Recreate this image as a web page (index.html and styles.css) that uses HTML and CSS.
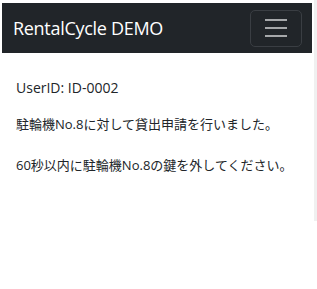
FILE: index.html
```html
<!DOCTYPE html>
<html lang="ja">

<head>
    <meta charset="UTF-8">
    <meta name="viewport" content="width=device-width, initial-scale=1.0">
    <title>RentalCycle DEMO</title>
    <link rel="stylesheet" href="styles.css">
</head>

<body>
    <nav class="navbar">
        <a class="brand" href="#">RentalCycle DEMO</a>
        <button class="toggler" type="button">
            <span class="toggler-icon"></span>
        </button>
    </nav>
    <main class="content">
        <div class="user">UserID: ID-0002</div>
        <p>駐輪機No.8に対して貸出申請を行いました。</p>
        <p>60秒以内に駐輪機No.8の鍵を外してください。</p>
    </main>
</body>

</html>
```

FILE: styles.css
```css
html {
    background-color: white;
    border-right: 3px solid #f0f0f0;
}

body {
    font-family: 'Open Sans', 'Noto Sans CJK JP', sans-serif;
    color: #212529;
    margin: 3px 2px 0 2px;
}

.navbar {
    background-color: #212529;
    height: 50px;
    display: flex;
    align-items: center;
    justify-content: space-between;
    padding: 0 10px 0 11px;
}

.brand {
    color: white;
    text-decoration: none;
    font-size: 18px;
    letter-spacing: -0.3px;
}

.toggler {
    width: 52px;
    height: 37px;
    background: transparent;
    border: 1px solid #3a3e43;
    border-radius: 5px;
    display: flex;
    align-items: center;
    justify-content: center;
    padding: 0;
}

.toggler-icon {
    display: block;
    width: 22px;
    height: 2px;
    background-color: #a6a8aa;
    box-shadow: 0 -8px 0 #a6a8aa, 0 8px 0 #a6a8aa;
}

.content {
    padding: 25px 14px;
    font-size: 13px;
    line-height: 20px;
}

.user {
    font-size: 14px;
    margin-bottom: 16px;
}

.content p {
    margin: 0 0 21px 0;
}
```
